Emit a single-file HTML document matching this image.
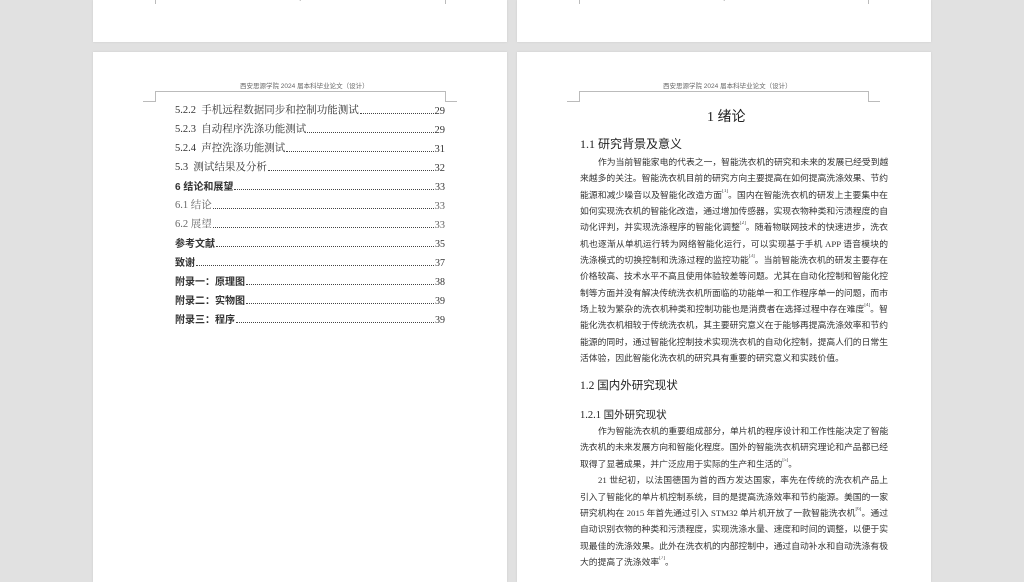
<!DOCTYPE html>
<html><head><meta charset="utf-8"><style>
*{margin:0;padding:0;box-sizing:border-box}
body{width:1024px;height:575px;background:#e1e1e1;position:relative;overflow:hidden;font-family:"Liberation Serif","Noto Serif CJK SC",serif;color:#222}
.pg{position:absolute;background:#fff;box-shadow:0 0 2px #ccc}
.a{position:absolute;white-space:nowrap}
.hl{position:absolute;background:#bbb}
.hd{position:absolute;font-size:6.5px;color:#666;font-family:"Liberation Sans","Noto Sans CJK SC",sans-serif}
.toc{position:absolute;left:175px;width:270px;height:14px;font-size:10.5px;display:flex;align-items:flex-end;color:#333}
.toc .d{flex:1;border-bottom:1px dotted #444;margin:0 1px 3px}
.toc.b{font-family:"Liberation Sans","Noto Sans CJK SC",sans-serif;font-weight:bold;font-size:10px}
.toc.g{color:#666}
.ln{position:absolute;left:580px;width:308px;font-size:8.8px;line-height:12px;text-align:justify;text-align-last:justify;white-space:nowrap;overflow:hidden;color:#333;font-family:"Liberation Serif","Noto Sans CJK SC",sans-serif}
.ln.s{text-align-last:left}
.ln.i{left:598px;width:290px}
sup{font-size:5px;vertical-align:top;line-height:6px}
.h{position:absolute;left:580px;font-family:"Liberation Serif","Noto Sans CJK SC",sans-serif;color:#222;white-space:nowrap}
</style></head><body>
<div class="pg" style="left:93px;top:0;width:414px;height:42px"></div>
<div class="pg" style="left:517px;top:0;width:414px;height:42px"></div>
<div class="hl" style="left:155px;top:0;width:1px;height:4px"></div>
<div class="hl" style="left:445px;top:0;width:1px;height:4px"></div>
<div class="hl" style="left:579px;top:0;width:1px;height:4px"></div>
<div class="hl" style="left:868px;top:0;width:1px;height:4px"></div>
<div class="a" style="left:298px;top:-3px;font-size:6px;color:#777">4</div>
<div class="a" style="left:722px;top:-3px;font-size:6px;color:#777">4</div>

<div class="pg" style="left:93px;top:52px;width:414px;height:530px"></div>
<div class="pg" style="left:517px;top:52px;width:414px;height:530px"></div>

<div class="hd" style="left:240px;top:80px">西安思源学院 2024 届本科毕业论文（设计）</div>
<div class="hl" style="left:155px;top:91px;width:291px;height:1px"></div>
<div class="hl" style="left:155px;top:91px;width:1px;height:11px"></div>
<div class="hl" style="left:143px;top:101px;width:12px;height:1px"></div>
<div class="hl" style="left:445px;top:91px;width:1px;height:11px"></div>
<div class="hl" style="left:445px;top:101px;width:12px;height:1px"></div>

<div class="toc" style="top:103px"><span>5.2.2&nbsp; 手机远程数据同步和控制功能测试</span><span class="d"></span><span>29</span></div>
<div class="toc" style="top:122px"><span>5.2.3&nbsp; 自动程序洗涤功能测试</span><span class="d"></span><span>29</span></div>
<div class="toc" style="top:141px"><span>5.2.4&nbsp; 声控洗涤功能测试</span><span class="d"></span><span>31</span></div>
<div class="toc" style="top:160px"><span>5.3&nbsp; 测试结果及分析</span><span class="d"></span><span>32</span></div>
<div class="toc b" style="top:179px"><span>6 结论和展望</span><span class="d"></span><span style="font-weight:normal;font-family:'Liberation Serif'">33</span></div>
<div class="toc g" style="top:198px"><span>6.1 结论</span><span class="d"></span><span>33</span></div>
<div class="toc g" style="top:217px"><span>6.2 展望</span><span class="d"></span><span>33</span></div>
<div class="toc b" style="top:236px"><span>参考文献</span><span class="d"></span><span style="font-weight:normal;font-family:'Liberation Serif'">35</span></div>
<div class="toc b" style="top:255px"><span>致谢</span><span class="d"></span><span style="font-weight:normal;font-family:'Liberation Serif'">37</span></div>
<div class="toc b" style="top:274px"><span>附录一：原理图</span><span class="d"></span><span style="font-weight:normal;font-family:'Liberation Serif'">38</span></div>
<div class="toc b" style="top:293px"><span>附录二：实物图</span><span class="d"></span><span style="font-weight:normal;font-family:'Liberation Serif'">39</span></div>
<div class="toc b" style="top:312px"><span>附录三：程序</span><span class="d"></span><span style="font-weight:normal;font-family:'Liberation Serif'">39</span></div>

<div class="hd" style="left:663px;top:80px">西安思源学院 2024 届本科毕业论文（设计）</div>
<div class="hl" style="left:579px;top:91px;width:290px;height:1px"></div>
<div class="hl" style="left:579px;top:91px;width:1px;height:11px"></div>
<div class="hl" style="left:567px;top:101px;width:12px;height:1px"></div>
<div class="hl" style="left:868px;top:91px;width:1px;height:11px"></div>
<div class="hl" style="left:868px;top:101px;width:12px;height:1px"></div>

<div class="a" style="left:707px;top:106px;font-size:14px;font-family:'Liberation Serif','Noto Sans CJK SC',sans-serif">1 绪论</div>
<div class="h" style="top:135px;font-size:12px">1.1 研究背景及意义</div>
<div class="ln i" style="top:156px">作为当前智能家电的代表之一，智能洗衣机的研究和未来的发展已经受到越</div>
<div class="ln" style="top:172.3px">来越多的关注。智能洗衣机目前的研究方向主要提高在如何提高洗涤效果、节约</div>
<div class="ln" style="top:188.7px">能源和减少噪音以及智能化改造方面<sup>[1]</sup>。国内在智能洗衣机的研发上主要集中在</div>
<div class="ln" style="top:205px">如何实现洗衣机的智能化改造，通过增加传感器，实现衣物种类和污渍程度的自</div>
<div class="ln" style="top:221.3px">动化评判，并实现洗涤程序的智能化调整<sup>[2]</sup>。随着物联网技术的快速进步，洗衣</div>
<div class="ln" style="top:237.7px">机也逐渐从单机运行转为网络智能化运行，可以实现基于手机 APP 语音模块的</div>
<div class="ln" style="top:254px">洗涤模式的切换控制和洗涤过程的监控功能<sup>[3]</sup>。当前智能洗衣机的研发主要存在</div>
<div class="ln" style="top:270.3px">价格较高、技术水平不高且使用体验较差等问题。尤其在自动化控制和智能化控</div>
<div class="ln" style="top:286.7px">制等方面并没有解决传统洗衣机所面临的功能单一和工作程序单一的问题，而市</div>
<div class="ln" style="top:303px">场上较为繁杂的洗衣机种类和控制功能也是消费者在选择过程中存在难度<sup>[4]</sup>。智</div>
<div class="ln" style="top:319.3px">能化洗衣机相较于传统洗衣机，其主要研究意义在于能够再提高洗涤效率和节约</div>
<div class="ln" style="top:335.7px">能源的同时，通过智能化控制技术实现洗衣机的自动化控制，提高人们的日常生</div>
<div class="ln s" style="top:352px">活体验，因此智能化洗衣机的研究具有重要的研究意义和实践价值。</div>
<div class="h" style="top:377px;font-size:11.5px">1.2 国内外研究现状</div>
<div class="h" style="top:407px;font-size:10.5px">1.2.1 国外研究现状</div>
<div class="ln i" style="top:425px">作为智能洗衣机的重要组成部分，单片机的程序设计和工作性能决定了智能</div>
<div class="ln" style="top:441.4px">洗衣机的未来发展方向和智能化程度。国外的智能洗衣机研究理论和产品都已经</div>
<div class="ln s" style="top:457.8px">取得了显著成果，并广泛应用于实际的生产和生活的<sup>[5]</sup>。</div>
<div class="ln i" style="top:474.2px">21 世纪初，以法国德国为首的西方发达国家，率先在传统的洗衣机产品上</div>
<div class="ln" style="top:490.6px">引入了智能化的单片机控制系统，目的是提高洗涤效率和节约能源。美国的一家</div>
<div class="ln" style="top:507px">研究机构在 2015 年首先通过引入 STM32 单片机开放了一款智能洗衣机<sup>[6]</sup>。通过</div>
<div class="ln" style="top:523.4px">自动识别衣物的种类和污渍程度，实现洗涤水量、速度和时间的调整，以便于实</div>
<div class="ln" style="top:539.8px">现最佳的洗涤效果。此外在洗衣机的内部控制中，通过自动补水和自动洗涤有极</div>
<div class="ln s" style="top:556.2px">大的提高了洗涤效率<sup>[7]</sup>。</div>
</body></html>
